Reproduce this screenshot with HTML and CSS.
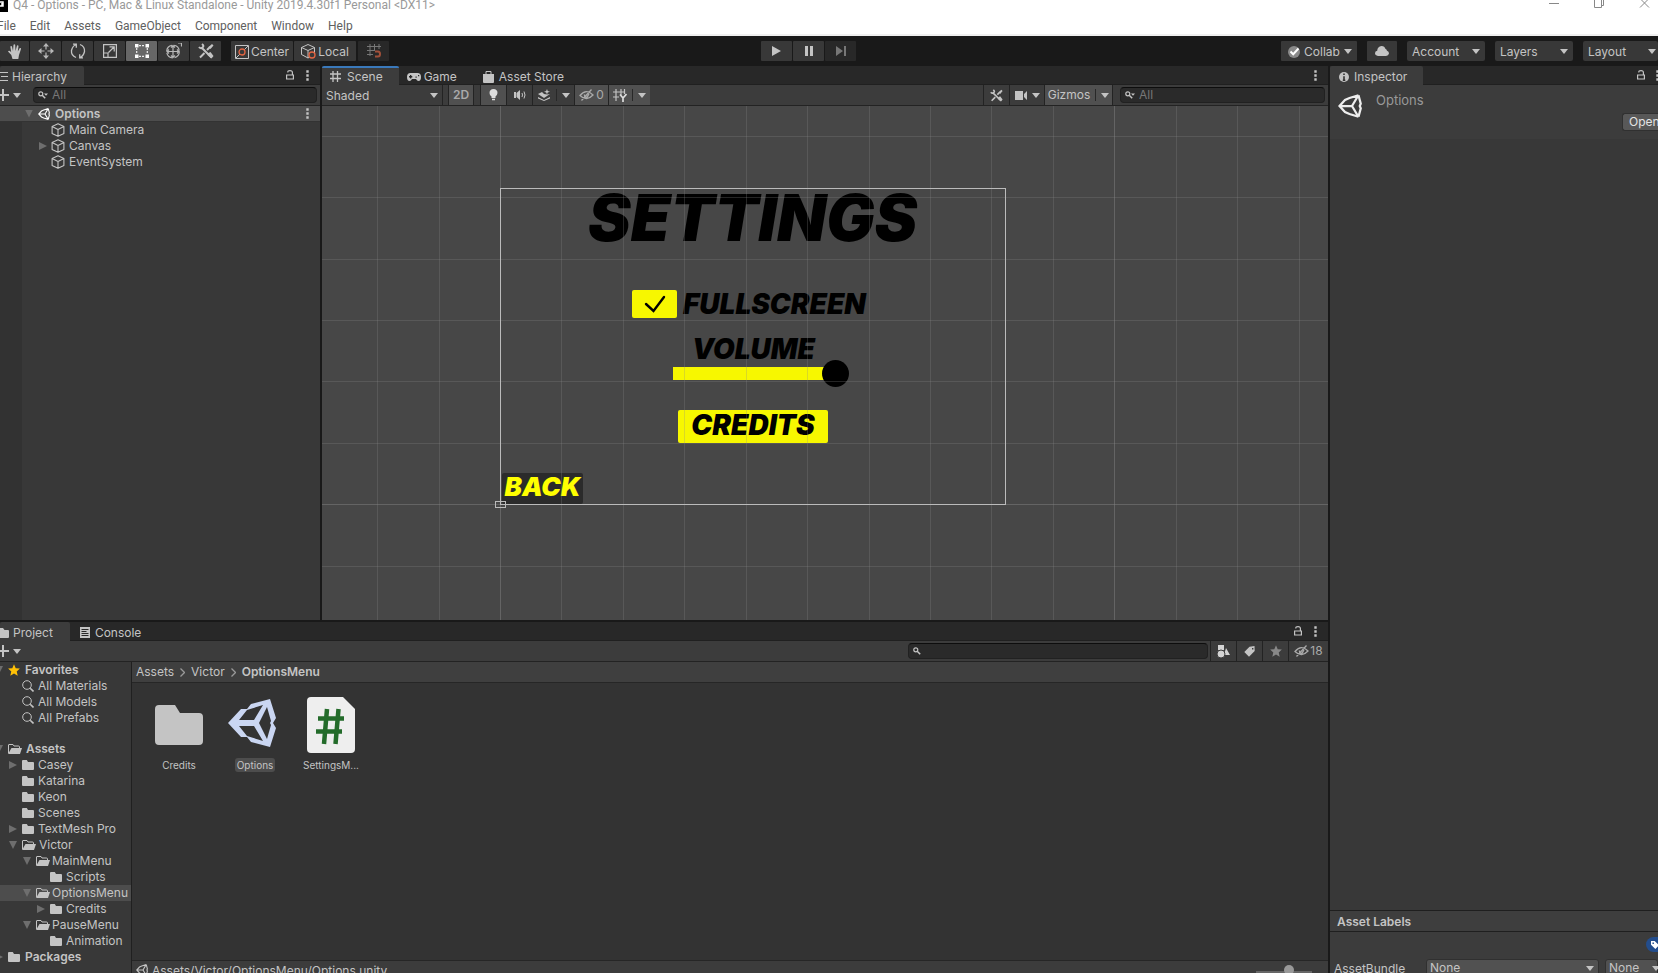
FILE: index.html
```html
<!DOCTYPE html>
<html lang="en">
<head>
<meta charset="utf-8">
<title>Q4 - Options - Unity</title>
<link rel="stylesheet" href="styles.css">
</head>
<body>
<svg class="defs" aria-hidden="true">
  <symbol id="unity" viewBox="0 0 48 48"><path fill="none" stroke="currentColor" stroke-width="4.500" stroke-linejoin="miter" d="M41 2.500 23 8 14 12 3 24l11 12 9 4 18 5.500M41 2.500l4.500 17-2 4.500 2 4.500-4.500 17M3 24h25M28 24 40.500 3M28 24l12.500 21"/></symbol>
  <symbol id="unity-large" viewBox="0 0 48 48"><path fill="currentColor" fill-rule="evenodd" d="M0 24 13 10h6l4-5 19-5 6 19-3 5 3 5-6 19-19-5-4-5h-6zM35 6 19 11l-8 10h15zM39 8l-8 16 8 16 4-14-1-2 1-2zM11 27l8 10 16 5-9-15z"/></symbol>
  <symbol id="cube" viewBox="0 0 14 14"><path fill="none" stroke="currentColor" stroke-width="1.100" stroke-linejoin="round" d="M7 .800 12.900 3.600v6.800L7 13.300 1.100 10.400V3.600zM1.100 3.600 7 6.500l5.900-2.900M7 6.500v6.800"/></symbol>
  <symbol id="folder" viewBox="0 0 12 10"><path fill="currentColor" d="M0 1Q0 0 1 0h3.800l1.200 2h5q1 0 1 1v6q0 1-1 1H1q-1 0-1-1z"/></symbol>
  <symbol id="folder-open" viewBox="0 0 14 10"><path fill="none" stroke="currentColor" d="M.5 9V1Q.5.500 1 .500h4l1 1.500h4.500q1 0 1 1v1"/><path fill="currentColor" d="M3.500 4H14l-2 6H0z"/></symbol>
  <symbol id="lens" viewBox="0 0 12 12"><circle cx="5" cy="5" r="4.300" fill="none" stroke="currentColor"/><path stroke="currentColor" stroke-width="1.600" d="m8.200 8.200 3.300 3.300"/></symbol>
  <symbol id="find" viewBox="0 0 10 8"><circle cx="2.800" cy="2.800" r="2" fill="none" stroke="currentColor" stroke-width="1.200"/><path stroke="currentColor" stroke-width="1.500" d="m4.200 4.200 3 3"/><path fill="currentColor" d="M6 2.500h4L8 4.700z"/></symbol>
  <symbol id="find-plain" viewBox="0 0 8 8"><circle cx="2.800" cy="2.800" r="2" fill="none" stroke="currentColor" stroke-width="1.200"/><path stroke="currentColor" stroke-width="1.500" d="m4.200 4.200 3 3"/></symbol>
  <symbol id="lock" viewBox="0 0 8 10"><path fill="none" stroke="currentColor" stroke-width="1.200" d="M.6 5h6.800v4H.600zM6.400 5V2.500Q6.400.600 4 .600T1.800 2.500"/></symbol>
  <symbol id="kebab" viewBox="0 0 3 11"><path fill="currentColor" d="M.3.300h2.400v2.400H.300zm0 4h2.400v2.400H.300zm0 4h2.400v2.400H.300z"/></symbol>
  <symbol id="down" viewBox="0 0 8 5"><path fill="currentColor" d="M0 0h8L4 5z"/></symbol>
  <symbol id="plus" viewBox="0 0 9 12"><path stroke="currentColor" stroke-width="2" d="M0 6h9M3 0v12"/></symbol>
  <symbol id="tools" viewBox="0 0 16 16"><path fill="none" stroke="currentColor" stroke-width="2" d="m4 5 9.500 9.500M1 4q1.500 2 3.500.500T4 1M2 14.500 6.500 10M9 7l3-3"/><path fill="currentColor" d="m10.500 4 3.500-3 1.500 1.500-3 3.500zM10.500 10l2-1 3 4-2 2.500-4-3.500z"/></symbol>
  <symbol id="eye-off" viewBox="0 0 15 12"><path fill="none" stroke="currentColor" stroke-width="1.300" d="M1 6.500Q7.500-1 14 6 7.500 13 1 6.500zM2.500 11.500 12.500.500"/><path fill="none" stroke="currentColor" stroke-width="1.500" d="M5.500 5.500q0 3 2.500 3l2-4"/></symbol>
  <symbol id="star" viewBox="0 0 12 12"><path fill="currentColor" d="m6 .300 1.700 3.900 4.200.400-3.200 2.800 1 4.300L6 9.400l-3.700 2.300 1-4.300L.100 4.600l4.200-.400z"/></symbol>
  <symbol id="tag" viewBox="0 0 11 11"><path fill="currentColor" fill-rule="evenodd" d="M5.500.800 10.500 0l.200 5L5 10.700.300 6zM8 2v1.500h1.400V2z"/></symbol>
  <symbol id="hash" viewBox="0 0 11 11"><path stroke="currentColor" stroke-width="1.300" d="M3 0v11M7.500 0v11M0 3h11M0 7.500h11"/></symbol>
</svg>

<div class="app">
  <header class="window">
    <div class="titlebar">
      <svg class="app-icon" viewBox="0 0 8 12"><path d="M0 0h8v12H0z"/><path fill="none" stroke="#fff" stroke-width="1.500" d="M0 2h3v4H0M2 3v3"/></svg>
      <span class="title">Q4 - Options - PC, Mac &amp; Linux Standalone - Unity 2019.4.30f1 Personal &lt;DX11&gt;</span>
      <svg class="win-controls" viewBox="0 0 109 8"><path fill="none" stroke="#888" d="M0 3.500h10M45.500-.500h7v8h-7zM52 5.500h2.500V-1M91 7.500l9-9M91-1.500l9 9"/></svg>
    </div>
    <nav class="menu"><button>File</button><button>Edit</button><button>Assets</button><button>GameObject</button><button>Component</button><button>Window</button><button>Help</button></nav>
  </header>

  <div class="toolbar">
    <div class="tools">
      <button aria-label="Hand"><svg width="14" height="15" viewBox="0 0 14 15"><path fill="#c4c4c4" d="M4.500 15 3.300 11 0 7.500Q.600 6.200 2 7l1.200 1.200L2.300 2.500Q3.300 1.300 4 2.500L5 7 5.500.800Q6.500-.300 7.200.800L7.500 7 9 1.500Q10.200.900 10.500 2L9.800 7.500l2-3.500Q13.200 3.500 13 5l-2 6-.7 4z"/></svg></button>
      <button aria-label="Move"><svg width="16" height="16" viewBox="0 0 16 16"><path fill="#b8b8b8" d="m8 0 3 3.500H5zM8 16l3-3.500H5zM0 8l3.500-3v6zM16 8l-3.500-3v6z"/><path stroke="#b8b8b8" stroke-width="1.200" d="M8 3v3.500M8 9.500V13M3 8h3.500M9.500 8H13"/></svg></button>
      <button aria-label="Rotate"><svg width="16" height="16" viewBox="0 0 16 16" fill="none" stroke="#c4c4c4" stroke-width="1.300"><path d="M6 14.500Q1 12.500 1.500 7.500 2.500 3 6 1.500M3 1.200h3.300v3.500M10 1.500q5 2 4.500 7Q13.500 13 10 14.500M13 14.800H9.700v-3.500"/></svg></button>
      <button aria-label="Scale"><svg width="14" height="14" viewBox="0 0 14 14" fill="none" stroke="#c4c4c4" stroke-width="1.200"><path d="M.600.600h12.800v12.800H.600zM.600 9h4.400v4.400M5.500 8.500 11 3M6.500 2.800h4.700v4.700"/></svg></button>
      <button class="selected" aria-label="Rect"><svg width="14" height="14" viewBox="0 0 14 14"><path stroke="#eee" stroke-width="1.200" d="M4 1.700h6M4 12.300h6M1.700 4v6M12.300 4v6" stroke-dasharray="2 1"/><path fill="#fff" d="M0 0h3.500v3.500H0zM10.500 0H14v3.500h-3.500zM0 10.500h3.500V14H0zM10.500 10.500H14V14h-3.500z"/></svg></button>
      <button aria-label="Transform"><svg width="17" height="17" viewBox="0 0 17 17" fill="none" stroke="#b8b8b8" stroke-width="1.200"><circle cx="8" cy="8.500" r="6.300" stroke-dasharray="8 1.900"/><path d="M8 3v11M2.500 8.500h11M6 4.500l2-2 2 2M6 12.500l2 2 2-2M4 6.500l-2 2 2 2M12 6.500l2 2-2 2M13 0h3.500v3.500"/></svg></button>
      <button aria-label="Custom tools"><svg width="16" height="16"><use href="#tools"/></svg></button>
    </div>
    <div class="pivot">
      <button><svg width="14" height="14" viewBox="0 0 14 14" fill="none"><path stroke="#c4c4c4" d="M.5.500h13v13H.500zM1 13l12-12"/><circle cx="7" cy="7" r="3" fill="#383838" stroke="#e26543" stroke-width="1.300"/></svg>Center</button><button><svg width="15" height="15" viewBox="0 0 15 15" fill="none"><path stroke="#c4c4c4" d="M7 .5 13.500 3.500v7L7 14 .500 10.500v-7zM.500 3.500 7 6.500l6.500-3M7 6.500V14"/><circle cx="11" cy="11" r="3" fill="#383838" stroke="#e26543" stroke-width="1.300"/></svg>Local</button>
    </div>
    <button class="dim snap" aria-label="Snap"><svg width="14" height="14" viewBox="0 0 14 14" fill="none"><path stroke="#777" d="M3 0v12M7.500 0v7M12 0v5M0 2.500h14M0 6.500h8M0 10.500h6"/><path stroke="#a1503a" stroke-width="2" d="M8 7.500h3q2 0 2 2.500t-2 2.500H8"/></svg></button>
    <span class="space-a"></span>
    <div class="play">
      <button aria-label="Play"><svg width="9" height="10" viewBox="0 0 9 10"><path fill="#c4c4c4" d="M0 0v10l9-5z"/></svg></button>
      <button aria-label="Pause"><svg width="8" height="10" viewBox="0 0 8 10"><path fill="#c4c4c4" d="M0 0h3v10H0zM5 0h3v10H5z"/></svg></button>
      <button class="dim" aria-label="Step"><svg width="10" height="10" viewBox="0 0 10 10"><path fill="#777" d="M0 0v10l7-5zM8 0h2v10H8z"/></svg></button>
    </div>
    <span class="space-b"></span>
    <div class="account">
      <button class="collab"><svg width="12" height="12" viewBox="0 0 12 12"><circle cx="6" cy="6" r="6" fill="#8a8a8a"/><path fill="none" stroke="#fff" stroke-width="2" d="m2.500 5.500 2.700 2.700L10.500 2.500"/></svg>Collab<svg class="arrow"><use href="#down"/></svg></button>
      <button class="cloud" aria-label="Cloud"><svg width="14" height="10" viewBox="0 0 14 10"><path fill="#c4c4c4" d="M3 10Q0 9.500 0 7.300 0 5 2.200 4.800 2.500.500 6.500.100 9.500 0 10.500 3 11.500 2.800 12 4.800 14 5.300 14 7.500 13.500 9.800 11 10z"/></svg></button>
      <span class="dropdown"><select aria-label="Account"><option>Account</option></select></span>
      <span class="dropdown"><select aria-label="Layers"><option>Layers</option></select></span>
      <span class="dropdown last"><select aria-label="Layout"><option>Layout</option></select></span>
    </div>
  </div>

  <div class="workspace">
    <div class="left">
      <div class="upper">
        <section class="panel hierarchy">
          <div class="tabs"><button class="tab active first"><svg width="8" height="9" viewBox="0 0 8 9"><path stroke="#c4c4c4" d="M0 .500h8M1 4.500h7M0 8.500h8"/></svg>Hierarchy</button><span class="fill"></span><svg class="lock"><use href="#lock"/></svg><svg class="kebab"><use href="#kebab"/></svg></div>
          <div class="bar"><button class="add" aria-label="Add"><svg width="9" height="12"><use href="#plus"/></svg><svg class="arrow"><use href="#down"/></svg></button><label class="search"><svg width="10" height="8"><use href="#find"/></svg><input type="text" placeholder="All" aria-label="Search hierarchy"></label></div>
          <div class="scene-tree">
            <div class="node root"><i class="open"></i><svg width="12" height="12"><use href="#unity"/></svg><b>Options</b><span class="fill"></span><svg class="kebab"><use href="#kebab"/></svg></div>
            <div class="node"><i></i><svg width="14" height="14"><use href="#cube"/></svg>Main Camera</div>
            <div class="node"><i class="closed"></i><svg width="14" height="14"><use href="#cube"/></svg>Canvas</div>
            <div class="node"><i></i><svg width="14" height="14"><use href="#cube"/></svg>EventSystem</div>
          </div>
        </section>

        <section class="panel scene">
          <div class="tabs"><button class="tab active focus"><svg width="11" height="11"><use href="#hash"/></svg>Scene</button><button class="tab game"><svg width="14" height="8" viewBox="0 0 14 8"><path fill="#c4c4c4" fill-rule="evenodd" d="M3.500 0h7Q14 0 14 4t-2.500 4Q10 8 9 6H5Q4 8 2.500 8 0 8 0 4T3.500 0zM3 2v1H2v1.500h1v1h1.300v-1h1V3h-1V2zM8.500 3.500v1.300h1.200V3.500zM11 2v1.300h1.200V2z"/></svg>Game</button><button class="tab store"><svg width="11" height="12" viewBox="0 0 11 12"><path fill="#c4c4c4" d="M0 3h11v8q0 1-1 1H1q-1 0-1-1z"/><path fill="none" stroke="#c4c4c4" d="M3 5V.500h5V5"/></svg>Asset Store</button><span class="fill"></span><svg class="kebab"><use href="#kebab"/></svg></div>
          <div class="bar scene-bar">
            <span class="dropdown flat"><select aria-label="Draw mode"><option>Shaded</option></select></span>
            <button class="cell on two-d">2D</button>
            <button class="cell on" aria-label="Lighting"><svg width="9" height="12" viewBox="0 0 9 12"><path fill="#ddd" d="M4.500 0Q8.500.300 8.500 4 8.300 6 6.500 7.500V9h-4V7.500Q.500 6 .500 4 .500.300 4.500 0zM3 9.800h3v1.500H3z"/></svg></button>
            <button class="cell" aria-label="Audio"><svg width="12" height="10" viewBox="0 0 12 10"><path fill="#c4c4c4" d="M0 2h2v6H0zM2.500 3 6 0v10L2.500 7z"/><path fill="none" stroke="#c4c4c4" d="M8 3q1 2 0 4M10 1.500q2 3.500 0 7"/></svg></button>
            <button class="cell wide" aria-label="Effects"><svg width="13" height="12" viewBox="0 0 13 12"><path fill="#c4c4c4" d="m0 5 4-2 2 2 3 .500L12 5l-6 4zM0 8l6 3 6-3v1.500L6 12 0 9.500zM9 0l.700 2 2.300.800-2.300.800L9 5.500 8.200 3.600 6 2.800 8.200 2z"/></svg><u></u><svg class="arrow"><use href="#down"/></svg></button>
            <button class="cell on count"><svg width="15" height="12"><use href="#eye-off"/></svg>0</button>
            <button class="cell on wide" aria-label="Grid"><svg width="14" height="13" viewBox="0 0 14 13"><path fill="none" stroke="#c4c4c4" stroke-width="1.200" d="M3 0v12M8 0v6M0 3h12M0 8h6M11.500 0v5"/><path fill="none" stroke="#ddd" stroke-width="1.700" d="m7 5.500 3 3.500 3.500-4M10 9v4"/></svg><u></u><svg class="arrow"><use href="#down"/></svg></button>
            <span class="fill"></span>
            <button class="cell" aria-label="Scene tools"><svg width="13" height="13"><use href="#tools"/></svg></button>
            <button class="cell camera" aria-label="Camera"><svg width="12" height="9" viewBox="0 0 12 9"><path fill="#c4c4c4" d="M0 0h8v9H0zM9 3l3-3v9L9 6z"/></svg><svg class="arrow"><use href="#down"/></svg></button>
            <button class="cell on gizmos">Gizmos<u></u><svg class="arrow"><use href="#down"/></svg></button>
            <label class="search"><svg width="10" height="8"><use href="#find"/></svg><input type="text" placeholder="All" aria-label="Search scene"></label>
          </div>
          <div class="viewport">
            <div class="canvas">
              <h1>SETTINGS</h1>
              <label class="fullscreen"><span class="check"><input type="checkbox" checked><svg width="22" height="18" viewBox="0 0 22 18"><path fill="none" stroke="#000" stroke-width="2.400" stroke-linecap="round" d="m2 9 7.500 7L20 2"/></svg></span>FULLSCREEN</label>
              <label class="volume" for="vol">VOLUME</label>
              <input id="vol" type="range" min="0" max="100" value="100">
              <button class="credits">CREDITS</button>
              <button class="back">BACK</button>
            </div>
            <svg class="grid" shape-rendering="crispEdges" aria-hidden="true">
              <g><line x1="55.500" x2="55.500" y2="100%"/><line x1="117.500" x2="117.500" y2="100%"/><line class="major" x1="178.500" x2="178.500" y2="100%"/><line x1="239.500" x2="239.500" y2="100%"/><line x1="301.500" x2="301.500" y2="100%"/><line x1="362.500" x2="362.500" y2="100%"/><line x1="424.500" x2="424.500" y2="100%"/><line x1="485.500" x2="485.500" y2="100%"/><line x1="547.500" x2="547.500" y2="100%"/><line x1="608.500" x2="608.500" y2="100%"/><line x1="669.500" x2="669.500" y2="100%"/><line x1="731.500" x2="731.500" y2="100%"/><line class="major" x1="792.500" x2="792.500" y2="100%"/><line x1="854.500" x2="854.500" y2="100%"/><line x1="915.500" x2="915.500" y2="100%"/><line x1="977.500" x2="977.500" y2="100%"/>
              <line y1="30.500" y2="30.500" x2="100%"/><line y1="91.500" y2="91.500" x2="100%"/><line y1="153.500" y2="153.500" x2="100%"/><line y1="214.500" y2="214.500" x2="100%"/><line y1="275.500" y2="275.500" x2="100%"/><line y1="337.500" y2="337.500" x2="100%"/><line class="major" y1="398.500" y2="398.500" x2="100%"/><line y1="460.500" y2="460.500" x2="100%"/></g>
              <rect x="178.500" y="82.500" width="505" height="316"/>
              <rect x="173.500" y="395.500" width="10" height="6"/>
            </svg>
          </div>
        </section>
      </div>

      <section class="panel project">
        <div class="tabs"><button class="tab active first"><svg width="9" height="10" viewBox="3 0 9 10"><path fill="#c4c4c4" d="M0 0h6l1.500 2H11q1 0 1 1v6q0 1-1 1H0z"/></svg>Project</button><button class="tab console"><svg width="10" height="11" viewBox="0 0 10 11"><path fill="#c4c4c4" d="M0 0h10v11H0z"/><path stroke="#282828" d="M1.500 2.500h7M1.500 4.500h5M1.500 6.500h7M1.500 8.500h7"/></svg>Console</button><span class="fill"></span><svg class="lock"><use href="#lock"/></svg><svg class="kebab"><use href="#kebab"/></svg></div>
        <div class="bar project-bar"><button class="add" aria-label="Add"><svg width="9" height="12"><use href="#plus"/></svg><svg class="arrow"><use href="#down"/></svg></button><span class="fill"></span><label class="search"><svg width="8" height="8"><use href="#find-plain"/></svg><input type="text" aria-label="Search project"></label>
          <button class="cell" aria-label="Type"><svg width="13" height="13" viewBox="0 0 13 13"><path fill="#d4d4d4" d="M1 0h6v5H1zM9 3l4 7H7z"/><circle cx="4" cy="9" r="4" fill="#d4d4d4" stroke="#3c3c3c"/></svg></button><button class="cell" aria-label="Label"><svg width="11" height="11"><use href="#tag"/></svg></button><button class="cell grey" aria-label="Favorite"><svg width="12" height="12"><use href="#star"/></svg></button><button class="cell hidden-count"><svg width="15" height="12"><use href="#eye-off"/></svg>18</button></div>
        <div class="browser">
          <div class="tree">
            <div class="row d0"><i class="open"></i><svg class="gold" width="12" height="12"><use href="#star"/></svg><b>Favorites</b></div>
            <div class="row d1"><i></i><svg width="12" height="12"><use href="#lens"/></svg>All Materials</div>
            <div class="row d1"><i></i><svg width="12" height="12"><use href="#lens"/></svg>All Models</div>
            <div class="row d1"><i></i><svg width="12" height="12"><use href="#lens"/></svg>All Prefabs</div>
            <div class="row d0 group"><i class="open"></i><svg width="14" height="10"><use href="#folder-open"/></svg><b>Assets</b></div>
            <div class="row d1"><i class="closed"></i><svg width="12" height="10"><use href="#folder"/></svg>Casey</div>
            <div class="row d1"><i></i><svg width="12" height="10"><use href="#folder"/></svg>Katarina</div>
            <div class="row d1"><i></i><svg width="12" height="10"><use href="#folder"/></svg>Keon</div>
            <div class="row d1"><i></i><svg width="12" height="10"><use href="#folder"/></svg>Scenes</div>
            <div class="row d1"><i class="closed"></i><svg width="12" height="10"><use href="#folder"/></svg>TextMesh Pro</div>
            <div class="row d1"><i class="open"></i><svg width="14" height="10"><use href="#folder-open"/></svg>Victor</div>
            <div class="row d2"><i class="open"></i><svg width="14" height="10"><use href="#folder-open"/></svg>MainMenu</div>
            <div class="row d3"><i></i><svg width="12" height="10"><use href="#folder"/></svg>Scripts</div>
            <div class="row d2 current"><i class="open"></i><svg width="14" height="10"><use href="#folder-open"/></svg>OptionsMenu</div>
            <div class="row d3"><i class="closed"></i><svg width="12" height="10"><use href="#folder"/></svg>Credits</div>
            <div class="row d2"><i class="open"></i><svg width="14" height="10"><use href="#folder-open"/></svg>PauseMenu</div>
            <div class="row d3"><i></i><svg width="12" height="10"><use href="#folder"/></svg>Animation</div>
            <div class="row d0"><i class="closed"></i><svg width="12" height="10"><use href="#folder"/></svg><b>Packages</b></div>
          </div>
          <div class="content">
            <nav class="crumbs"><a href="#">Assets</a><svg viewBox="0 0 5 9"><path d="m.500.500 4 4-4 4"/></svg><a href="#">Victor</a><svg viewBox="0 0 5 9"><path d="m.500.500 4 4-4 4"/></svg><b>OptionsMenu</b></nav>
            <div class="files">
              <figure><svg width="48" height="56" viewBox="0 0 48 56"><path fill="#c4c4c4" d="M0 12q0-4 4-4h16l5 8h19q4 0 4 4v24q0 4-4 4H4q-4 0-4-4z"/></svg><figcaption>Credits</figcaption></figure>
              <figure class="picked"><svg width="54" height="56"><use href="#unity-large"/></svg><figcaption>Options</figcaption></figure>
              <figure><svg width="48" height="56" viewBox="0 0 48 56"><path fill="#eee" d="M0 4q0-4 4-4h32l12 12v40q0 4-4 4H4q-4 0-4-4z"/><path fill="none" stroke="#236b2a" stroke-width="4.500" d="m20 12-3 35M31.500 12l-3 35M11 21.500h26M9 34.500h26"/></svg><figcaption>SettingsM...</figcaption></figure>
            </div>
            <div class="status"><svg width="12" height="12"><use href="#unity"/></svg>Assets/Victor/OptionsMenu/Options.unity<span class="fill"></span><input type="range" aria-label="Icon size" min="0" max="100" value="60"></div>
          </div>
        </div>
      </section>
    </div>

    <aside class="panel inspector">
      <div class="tabs"><button class="tab active"><svg width="10" height="10" viewBox="0 0 10 10"><circle cx="5" cy="5" r="5" fill="#c4c4c4"/><path stroke="#333" stroke-width="1.600" d="M5 1.500v1.600M5 4.200V8.500M3.800 8.200h2.500"/></svg>Inspector</button><span class="fill"></span><svg class="lock"><use href="#lock"/></svg><svg class="kebab-cut" width="3" height="11"><use href="#kebab" width="3" height="11"/></svg></div>
      <div class="asset-head"><svg width="24" height="24"><use href="#unity"/></svg><span>Options</span><button>Open</button></div>
      <div class="fill"></div>
      <h2>Asset Labels</h2>
      <div class="labels"><span class="badge"><svg width="8" height="8" viewBox="0 0 11 11"><path fill="#fff" fill-rule="evenodd" d="M0 0h5l6 6-5 5-6-6zM2 2v2h2V2z"/></svg></span></div>
      <div class="bundle"><label for="bundle">AssetBundle</label><span class="dropdown"><select id="bundle"><option>None</option></select></span><span class="dropdown variant"><select aria-label="Variant"><option>None</option></select></span></div>
    </aside>
  </div>
</div>
</body>
</html>
```
FILE: styles.css
```css
* { box-sizing: border-box; }
html, body { height: 100%; margin: 0; overflow: hidden; }
body { background: #191919; color: #c4c4c4; font: 12px/16px Inter, "Liberation Sans", sans-serif; }
button, input, select { margin: 0; padding: 0; border: 0; border-radius: 0; background: none; color: inherit; font: inherit; outline: 0; }
svg { flex: none; display: block; }
a { color: inherit; text-decoration: none; }
b, h2 { font-weight: 600; }
.defs { position: absolute; width: 0; height: 0; }
.fill { flex: 1; }
.app { display: flex; flex-direction: column; height: 100%; }
.arrow { width: 8px; height: 5px; }

/* window chrome */
.window { background: #fff; border-bottom: 2px solid #f0f0f0; font-family: Roboto, "Open Sans", sans-serif; height: 36px; }
.titlebar { display: flex; align-items: flex-start; height: 17px; color: #999; line-height: 10px; }
.title { margin-left: 5px; flex: 1; white-space: nowrap; }
.app-icon { width: 8px; height: 12px; }
.win-controls { width: 109px; height: 8px; }
.menu { display: flex; gap: 14px; color: #606060; margin-left: -3px; }
.menu button { line-height: 18px; }

/* main toolbar */
.toolbar { display: flex; align-items: center; height: 30px; flex: none; }
.toolbar button { display: flex; align-items: center; justify-content: center; height: 20px; background: #383838; border-radius: 1px; }
.tools, .play { display: flex; gap: 1px; }
.tools button, .play button { width: 31px; }
.tools button:first-child { width: 29px; }
.toolbar .selected { background: #676767; }
.pivot { display: flex; gap: 1px; margin-left: 10px; }
.pivot button { width: 62px; gap: 2px; padding-top: 1px; }
.toolbar .dim { background: #282828; }
.snap { width: 31px; margin-left: 2px; }
.space-a { flex: 372; }
.space-b { flex: 425; }
.account { display: flex; gap: 10px; }
.toolbar .collab { width: 76px; gap: 4px; padding: 1px 0 0 2px; }
.toolbar .cloud { width: 30px; }
.dropdown { display: block; position: relative; }
.dropdown select { appearance: none; width: 100%; height: 20px; padding: 1px 5px 0; border-radius: 2px; background: #383838; }
.dropdown::after { content: ""; position: absolute; right: 5px; top: 8px; border: 4px solid transparent; border-top: 5px solid #c4c4c4; border-bottom: 0; pointer-events: none; }
.account .dropdown { width: 78px; }
.account .last { width: 75px; }
.last::after { right: 2px; }

/* docking */
.workspace { flex: 1; display: flex; gap: 2px; min-height: 0; }
.left { flex: 1; display: flex; flex-direction: column; gap: 2px; min-width: 0; }
.upper { flex: 1; display: flex; gap: 2px; min-height: 0; }
.panel { display: flex; flex-direction: column; background: #383838; overflow: hidden; }
.hierarchy { flex: 0 0 320px; }
.scene { flex: 1; min-width: 0; }
.project { flex: 0 0 351px; }
.inspector { flex: 0 0 328px; }

.tabs { display: flex; align-items: center; height: 19px; flex: none; background: #282828; border-bottom: 1px solid #202020; }
.tab { display: flex; align-items: center; height: 19px; padding: 3px 17px 0 8px; gap: 5px; line-height: 16px; }
.tab.active { background: #3c3c3c; border-radius: 2px 2px 0 0; }
.tab.first { padding-left: 0; gap: 4px; }
.tab.focus { border-top: 2px solid #3a79bb; padding: 1px 16px 0 8px; gap: 6px; }
.tab.game { padding-left: 8px; gap: 3px; }
.store { padding-left: 9px; }
.console { padding-left: 10px; }
.lock { width: 8px; height: 10px; }
.kebab { width: 3px; height: 11px; margin: 0 11px 0 12px; }
.kebab-cut { margin: 0 -1px 0 11px; }

.bar { display: flex; align-items: center; height: 21px; flex: none; background: #3c3c3c; border-bottom: 1px solid #232323; }
.add { display: flex; align-items: center; gap: 4px; width: 33px; }
.search { display: flex; align-items: center; gap: 4px; height: 16px; padding-left: 4px; margin-right: 3px; min-width: 0; background: #2a2a2a; border: 1px solid #212121; border-top-color: #0d0d0d; border-radius: 4px; flex: 1; }
.search input { flex: 1; min-width: 0; }
.search input::placeholder { color: #777; opacity: 1; }

.scene-bar .dropdown { width: 121px; margin-right: 5px; border-right: 1px solid #232323; }
.flat select { background: none; padding: 1px 4px 0; }
.dropdown.flat::after { right: 4px; }
.cell { display: flex; align-items: center; justify-content: center; width: 26px; height: 20px; border-left: 1px solid #232323; }
.cell.on { background: #505050; }
.two-d { margin-right: 6px; font-weight: 600; color: #aaa; border-right: 1px solid #232323; }
.cell.wide { width: 42px; gap: 5px; }
.cell u { width: 1px; height: 12px; background: #282828; }
.cell.count { width: 34px; gap: 2px; color: #aaa; }
.cell.camera { width: 35px; gap: 5px; }
.cell.gizmos { width: 69px; gap: 5px; border-right: 1px solid #232323; }
.scene-bar .search { flex: 0 0 205px; margin-left: 7px; }

/* hierarchy tree */
.scene-tree { flex: 1; background: linear-gradient(90deg, #323232 22px, #383838 22px); }
.node, .row { display: flex; align-items: center; height: 16px; white-space: nowrap; }
.node { padding-left: 39px; gap: 4px; }
.node.root { background: #4d4d4d; padding-left: 25px; border-bottom: 1px solid #333; gap: 5px; }
.root > svg:first-of-type { color: #fff; }
i { flex: none; width: 8px; height: 8px; background: #6e6e6e; clip-path: polygon(0 0, 0 0, 0 0); }
i.open { clip-path: polygon(0 0, 100% 0, 50% 100%); }
i.closed { clip-path: polygon(0 0, 100% 50%, 0 100%); }

/* scene canvas: free placement */
.viewport { flex: 1; position: relative; overflow: hidden; background: #474747; }
.grid { position: absolute; inset: 0; width: 100%; height: 100%; pointer-events: none; }
.grid line { stroke: #888; stroke-opacity: .27; }
.grid .major { stroke-opacity: .45; }
.grid rect { fill: none; stroke: #bbb; }
.canvas { position: absolute; left: 178px; top: 82px; width: 505px; height: 317px; color: #000; font: italic 900 28px/28px Inter, "Liberation Sans", sans-serif; }
.canvas > * { position: absolute; }
h1 { left: 88px; top: 0; margin: 0; font-size: 64px; line-height: 60px; font-weight: 900; }
.fullscreen { left: 132px; top: 102px; display: flex; align-items: center; gap: 6px; }
.check { display: grid; place-items: center; }
.check > * { grid-area: 1 / 1; }
.check input { appearance: none; width: 45px; height: 28px; background: #f7f700; border-radius: 2px; }
.volume { left: 192px; top: 147px; }
.canvas input[type=range] { appearance: none; left: 173px; top: 172px; width: 176px; height: 27px; background: linear-gradient(#f7f700, #f7f700) 0 50% / 160px 13px no-repeat; }
.canvas input[type=range]::-webkit-slider-thumb { appearance: none; width: 27px; height: 27px; border-radius: 50%; background: #000; }
.credits { left: 178px; top: 222px; width: 150px; height: 33px; padding-bottom: 4px; background: #f7f700; border-radius: 2px; }
.back { left: 2px; top: 285px; width: 81px; height: 31px; padding-bottom: 3px; background: #2b2b2b; color: #ff0; border-radius: 2px; font-size: 26px; }

/* project browser */
.project-bar .search { flex: 0 0 300px; margin-right: 2px; }
.grey { color: #888; }
.cell.hidden-count { width: 40px; gap: 1px; color: #aaa; }
.browser { flex: 1; display: flex; min-height: 0; }
.tree { flex: 0 0 132px; border-right: 1px solid #202020; overflow: hidden; }
.row { gap: 4px; }
.row i { margin-right: 5px; }
.d0 { margin-left: -5px; gap: 5px; }
.d0 i { margin-right: 0; }
.d1 { padding-left: 9px; gap: 4px; }
.d1 i { margin-right: 1px; }
.d2 { padding-left: 23px; gap: 3px; }
.d2 i { margin-right: 2px; }
.d3 { padding-left: 37px; }
.d3 i { margin-right: 1px; }
.row svg[width="14"] { margin-right: -1px; }
.group { margin-top: 15px; }
.current { background: #4d4d4d; }
.gold { color: #ffc107; }
.content { flex: 1; display: flex; flex-direction: column; background: #333; min-width: 0; }
.crumbs { display: flex; align-items: center; gap: 6px; height: 21px; padding: 0 4px; background: #3f3f3f; border-bottom: 1px solid #262626; }
.crumbs svg { width: 5px; height: 9px; fill: none; stroke: #999; stroke-width: 1.3; }
.files { flex: 1; display: flex; padding: 14px 9px; }
figure { width: 76px; margin: 0; display: flex; flex-direction: column; align-items: center; gap: 5px; font-size: 10px; line-height: 14px; }
figcaption { padding: 0 2px; border-radius: 3px; }
.picked svg { color: #cad6f2; padding: 0 6px 4px 0; }
.picked figcaption { background: #4d4d4d; }
.status { display: flex; align-items: flex-start; gap: 4px; height: 13px; padding: 3px 16px 0 4px; background: #3c3c3c; border-top: 1px solid #262626; line-height: 14px; overflow: hidden; white-space: nowrap; }
.status input { appearance: none; width: 56px; height: 12px; background: linear-gradient(#666, #666) 0 7px / 100% 2px no-repeat; }
.status input::-webkit-slider-thumb { appearance: none; width: 10px; height: 10px; border-radius: 50%; background: #999; }

/* inspector */
.inspector .tab { gap: 5px; padding-left: 9px; padding-right: 16px; }
.asset-head { display: flex; align-items: flex-start; gap: 14px; height: 54px; padding: 9px 0 0 8px; background: #3c3c3c; font-size: 13px; line-height: 12px; color: #999; }
.asset-head svg { color: #eee; }
.asset-head span { flex: 1; }
.asset-head button { align-self: flex-start; width: 36px; height: 18px; margin-top: 19px; padding-left: 6px; text-align: left; font-size: 12px; color: #e4e4e4; background: #585858; border: 1px solid #303030; border-right: 0; border-radius: 3px 0 0 3px; overflow: hidden; }
h2 { margin: 0; padding: 0 7px; height: 22px; font-size: 12px; line-height: 22px; background: #3e3e3e; border: solid #1f1f1f; border-width: 1px 0; }
.labels { height: 27px; display: flex; justify-content: flex-end; padding-top: 5px; background: #3c3c3c; }
.badge { display: flex; align-items: center; width: 12px; height: 15px; padding-left: 5px; background: #234d8c; border-radius: 8px 0 0 8px; overflow: hidden; }
.bundle { display: flex; height: 14px; overflow: hidden; background: #3c3c3c; padding-left: 4px; }
.bundle label { width: 92px; padding-top: 2px; }
.bundle .dropdown { flex: 1; }
.bundle select { background: #515151; border: 1px solid #303030; padding: 0 3px; line-height: 16px; height: 18px; border-radius: 3px; }
.bundle .dropdown::after { top: 7px; }
.bundle .variant { flex: 0 0 53px; margin-left: 6px; }
.bundle .variant::after { right: -2px; }
```
